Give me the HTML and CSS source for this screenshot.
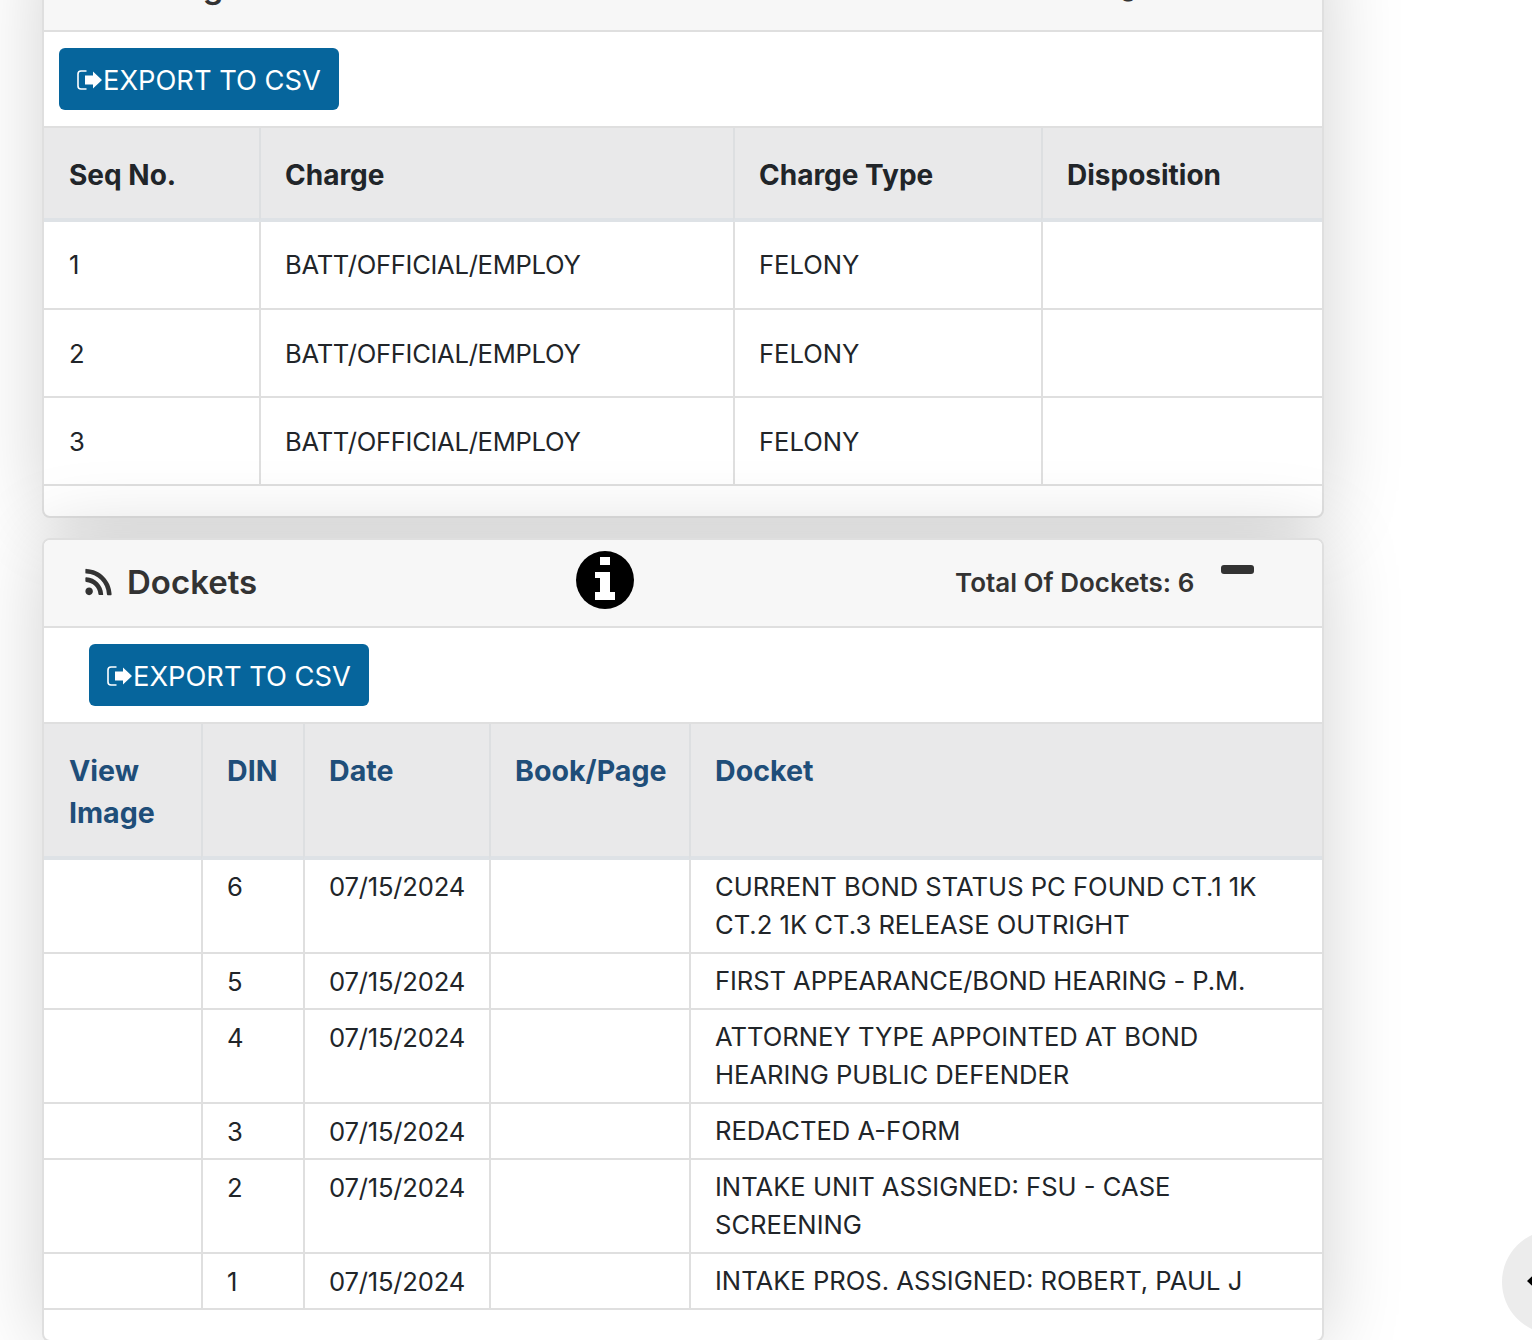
FILE: index.html
```html
<!DOCTYPE html>
<html lang="en">
<head>
<meta charset="utf-8">
<title>Case details</title>
<link rel="stylesheet" href="styles.css">
</head>
<body>
<main class="page">
  <section class="card card-charges">
    <header class="card-head">
      <div class="title"><svg class="rss" viewBox="0 0 448 512"><path d="M128.081 415.959c0 35.369-28.672 64.041-64.041 64.041S0 451.328 0 415.959s28.672-64.041 64.041-64.041 64.04 28.673 64.04 64.041zm175.66 47.25c-8.354-154.6-132.185-278.587-286.95-286.95C7.656 175.765 0 183.105 0 192.253v48.069c0 8.415 6.49 15.472 14.887 16.018 111.832 7.284 201.473 96.702 208.772 208.772.547 8.397 7.604 14.887 16.018 14.887h48.069c9.149.001 16.489-7.655 15.995-16.79zm144.249.288C439.596 229.677 251.465 40.445 16.503 32.01 7.473 31.686 0 38.981 0 48.016v48.068c0 8.625 6.835 15.645 15.453 15.999 191.179 7.839 344.627 161.316 352.465 352.465.353 8.618 7.373 15.453 15.999 15.453h48.068c9.034-.001 16.329-7.474 16.005-16.504z"/></svg><h2>Charges</h2></div>
      <div class="info-slot"></div>
      <div class="total">Total Of Charges: 3</div>
      <div class="minus-slot"><span class="minus"></span></div>
    </header>
    <div class="toolbar toolbar-a">
      <button class="export" type="button"><svg class="export-icon" viewBox="0 0 26 20"><path class="bracket" d="M9.500 1H4a3 3 0 0 0-3 3v12a3 3 0 0 0 3 3h5.500"/><path class="arrow" d="M8 5.500h8V1.500L25 10l-9 8.500V14.500H8z"/></svg>EXPORT TO CSV</button>
    </div>
    <table class="grid grid-charges">
      <colgroup><col class="c1"><col class="c2"><col class="c3"><col class="c4"></colgroup>
      <thead><tr><th>Seq No.</th><th>Charge</th><th>Charge Type</th><th>Disposition</th></tr></thead>
      <tbody>
        <tr><td>1</td><td class="slashed">BATT/OFFICIAL/EMPLOY</td><td>FELONY</td><td></td></tr>
        <tr class="row-low"><td>2</td><td class="slashed">BATT/OFFICIAL/EMPLOY</td><td>FELONY</td><td></td></tr>
        <tr class="row-low"><td>3</td><td class="slashed">BATT/OFFICIAL/EMPLOY</td><td>FELONY</td><td></td></tr>
      </tbody>
    </table>
  </section>

  <section class="card card-dockets">
    <header class="card-head">
      <div class="title"><svg class="rss" viewBox="0 0 448 512"><path d="M128.081 415.959c0 35.369-28.672 64.041-64.041 64.041S0 451.328 0 415.959s28.672-64.041 64.041-64.041 64.04 28.673 64.04 64.041zm175.66 47.25c-8.354-154.6-132.185-278.587-286.95-286.95C7.656 175.765 0 183.105 0 192.253v48.069c0 8.415 6.49 15.472 14.887 16.018 111.832 7.284 201.473 96.702 208.772 208.772.547 8.397 7.604 14.887 16.018 14.887h48.069c9.149.001 16.489-7.655 15.995-16.79zm144.249.288C439.596 229.677 251.465 40.445 16.503 32.01 7.473 31.686 0 38.981 0 48.016v48.068c0 8.625 6.835 15.645 15.453 15.999 191.179 7.839 344.627 161.316 352.465 352.465.353 8.618 7.373 15.453 15.999 15.453h48.068c9.034-.001 16.329-7.474 16.005-16.504z"/></svg><h2>Dockets</h2></div>
      <div class="info-slot"><svg class="info" viewBox="0 0 58 58"><circle cx="29" cy="29" r="29"/><path class="info-i" d="M24 6h10v8H24zM19 21h15v20h5v8H19v-8h5V27h-5z"/></svg></div>
      <div class="total">Total Of Dockets: 6</div>
      <div class="minus-slot"><span class="minus"></span></div>
    </header>
    <div class="toolbar toolbar-b">
      <button class="export" type="button"><svg class="export-icon" viewBox="0 0 26 20"><path class="bracket" d="M9.500 1H4a3 3 0 0 0-3 3v12a3 3 0 0 0 3 3h5.500"/><path class="arrow" d="M8 5.500h8V1.500L25 10l-9 8.500V14.500H8z"/></svg>EXPORT TO CSV</button>
    </div>
    <table class="grid grid-dockets">
      <colgroup><col class="d1"><col class="d2"><col class="d3"><col class="d4"><col class="d5"></colgroup>
      <thead><tr><th>View Image</th><th>DIN</th><th>Date</th><th>Book/Page</th><th>Docket</th></tr></thead>
      <tbody>
        <tr><td></td><td>6</td><td class="slashed-date">07/15/2024</td><td></td><td>CURRENT BOND STATUS PC FOUND CT.1 1K CT.2 1K CT.3 RELEASE OUTRIGHT</td></tr>
        <tr><td></td><td class="low">5</td><td class="slashed-date low">07/15/2024</td><td></td><td class="tight">FIRST APPEARANCE/BOND HEARING - P.M.</td></tr>
        <tr><td></td><td class="low">4</td><td class="slashed-date low">07/15/2024</td><td></td><td>ATTORNEY TYPE APPOINTED AT BOND HEARING PUBLIC DEFENDER</td></tr>
        <tr><td></td><td class="low">3</td><td class="slashed-date low">07/15/2024</td><td></td><td>REDACTED A-FORM</td></tr>
        <tr><td></td><td class="low">2</td><td class="slashed-date low">07/15/2024</td><td></td><td>INTAKE UNIT ASSIGNED: FSU - CASE SCREENING</td></tr>
        <tr><td></td><td class="low">1</td><td class="slashed-date low">07/15/2024</td><td></td><td>INTAKE PROS. ASSIGNED: ROBERT, PAUL J</td></tr>
      </tbody>
    </table>
  </section>
</main>
<div class="fab"><svg class="fab-arrow" viewBox="0 0 24 20"><path d="M0 10 9 1.500 12 1.500V7H24V13H12V18.500H9z"/></svg></div>
</body>
</html>
```

FILE: styles.css
```css
html, body {
  margin: 0;
  height: 100%;
  overflow: hidden;
  background: #fff;
}
body {
  font-family: Inter, "Liberation Sans", sans-serif;
  color: #212529;
}
.page {
  margin-top: -58px;
  padding-left: 42px;
  width: 1282px;
  display: flex;
  flex-direction: column;
  gap: 20px;
}
.card {
  background: #fff;
  border: 2px solid #dfdfdf;
  border-radius: 8px;
  padding-bottom: 30px;
  box-shadow: 0 0 80px rgba(0, 0, 0, 0.18);
  box-sizing: border-box;
}
.card-head {
  height: 88px;
  box-sizing: border-box;
  background: #f7f7f7;
  border-bottom: 2px solid #dfdfdf;
  border-radius: 6px 6px 0 0;
  display: grid;
  grid-template-columns: 532px 379px 266px 1fr;
  align-items: center;
}
.title {
  display: flex;
  align-items: center;
  padding-left: 41px;
  gap: 15px;
}
.rss {
  width: 27px;
  height: 30px;
  fill: #333;
  margin-top: -2px;
}
.title h2 {
  margin: -2px 0 0;
  font-size: 33px;
  font-weight: 600;
  line-height: 40px;
  color: #333;
}
.info-slot {
  display: flex;
  height: 58px;
  margin-top: -6px;
}
.info { width: 58px; height: 58px; }
.info circle { fill: #000; }
.info-i { fill: #fff; }
.total {
  font-size: 26px;
  font-weight: 600;
  color: #333;
  line-height: 38px;
}
.minus-slot {
  height: 48px;
}
.minus {
  display: block;
  width: 33px;
  height: 9px;
  background: #333;
  border-radius: 3px;
  margin-top: 6px;
}
.toolbar { padding-top: 16px; padding-bottom: 16px; }
.toolbar-a { padding-left: 15px; }
.toolbar-b { padding-left: 45px; }
.export {
  display: flex;
  align-items: center;
  box-sizing: border-box;
  width: 280px;
  height: 62px;
  padding: 2px 0 0 18px;
  background: #06659c;
  color: #fff;
  border: 0;
  border-radius: 6px;
  font-family: inherit;
  font-size: 27.3px;
  font-weight: 400;
  white-space: nowrap;
}
.export-icon { width: 26px; height: 20px; flex: none; }
.bracket { fill: none; stroke: #fff; stroke-width: 1.600; }
.arrow { fill: #fff; }
.grid {
  width: 100%;
  table-layout: fixed;
  border-collapse: separate;
  border-spacing: 0;
  border-top: 2px solid #dfdfdf;
  font-size: 25.6px;
}
.grid th, .grid td {
  border-left: 2px solid #dfdfdf;
  border-bottom: 2px solid #dfdfdf;
  padding: 24px 24px;
  text-align: left;
  vertical-align: top;
}
.grid th:first-child, .grid td:first-child {
  border-left: 0;
  padding-left: 25px;
}
.grid th {
  background: #e9e9ea;
  font-size: 28px;
  font-weight: 700;
  line-height: 42px;
  padding-top: 26px;
  padding-bottom: 22px;
  border-bottom-width: 4px;
  border-left-color: #dddfe1;
  border-bottom-color: #dee2e6;
}
.grid td { line-height: 38px; }
.grid .row-low td { padding-top: 25px; padding-bottom: 23px; }
.slashed { letter-spacing: -0.3px; }
.slashed-date { letter-spacing: -0.2px; }
.tight { letter-spacing: -0.08px; }
.c1 { width: 215px; }
.c2 { width: 474px; }
.c3 { width: 308px; }
.d1 { width: 157px; }
.d2 { width: 102px; }
.d3 { width: 186px; }
.d4 { width: 200px; }
.grid-dockets th { color: #1f4e79; font-size: 28.6px; }
.grid-dockets td { padding-top: 8px; padding-bottom: 8px; }
.grid-dockets td.low { padding-top: 9px; padding-bottom: 7px; }
.fab {
  position: fixed;
  left: 1502px;
  top: 1230px;
  width: 104px;
  height: 104px;
  border-radius: 50%;
  background: #ececec;
}
.fab-arrow {
  position: absolute;
  left: 25px;
  top: 41px;
  width: 24px;
  height: 20px;
  fill: #000;
}
```
